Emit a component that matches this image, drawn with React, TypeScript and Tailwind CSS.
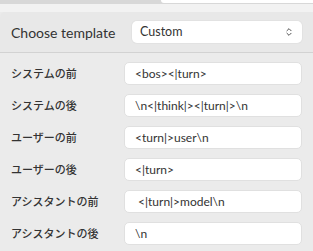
import { ChevronsUpDown } from "lucide-react"

const rows = [
  { label: "システムの前", value: "<bos><|turn>" },
  { label: "システムの後", value: "\\n<|think|><|turn|>\\n" },
  { label: "ユーザーの前", value: "<turn|>user\\n" },
  { label: "ユーザーの後", value: "<|turn>" },
  { label: "アシスタントの前", value: " <|turn|>model\\n" },
  { label: "アシスタントの後", value: "\\n" },
]

const font = { fontFamily: "Lato, 'Noto Sans CJK JP', sans-serif" }

function TemplateRow({ label, value }: { label: string; value: string }) {
  return (
    <div className="flex h-[23px] items-center">
      <span className="w-[121px] text-[11px] font-medium text-[#333]" style={{ fontFamily: "'Noto Sans CJK JP', sans-serif" }}>
        {label}
      </span>
      <input
        readOnly
        value={value}
        className="h-[23px] flex-1 rounded-[5px] border border-[#e0e0e0] bg-white px-[10px] text-[12px] text-[#333] outline-none"
        style={font}
      />
    </div>
  )
}

export default function App() {
  return (
    <div className="h-[251px] w-[313px] overflow-hidden bg-[#ebebeb]" style={font}>
      <div className="h-[4px] bg-[#d8d8d8]">
        <div className="ml-[161px] h-[3px] rounded-bl-[3px] bg-white" />
      </div>
      <div className="h-[8px] bg-[#f2f2f2]" />
      <div className="flex h-[41px] items-center rounded-tl-[5px] border-b border-[#d2d2d2] bg-[#e8e8e8] pl-[11px] pr-[11px]">
        <span className="w-[121px] text-[14px] text-[#333]">Choose template</span>
        <div className="flex h-[22px] flex-1 items-center justify-between rounded-[5px] bg-white pl-[8px] pr-[8px] shadow-[0_0_0_1px_#e2e2e2]">
          <span className="text-[12.5px] text-[#333]">Custom</span>
          <ChevronsUpDown className="h-[10px] w-[10px] text-[#444]" strokeWidth={2.2} />
        </div>
      </div>
      <div className="flex flex-col gap-[9px] px-[11px] pt-[9px]">
        {rows.map((r) => (
          <TemplateRow key={r.label} label={r.label} value={r.value} />
        ))}
      </div>
    </div>
  )
}
